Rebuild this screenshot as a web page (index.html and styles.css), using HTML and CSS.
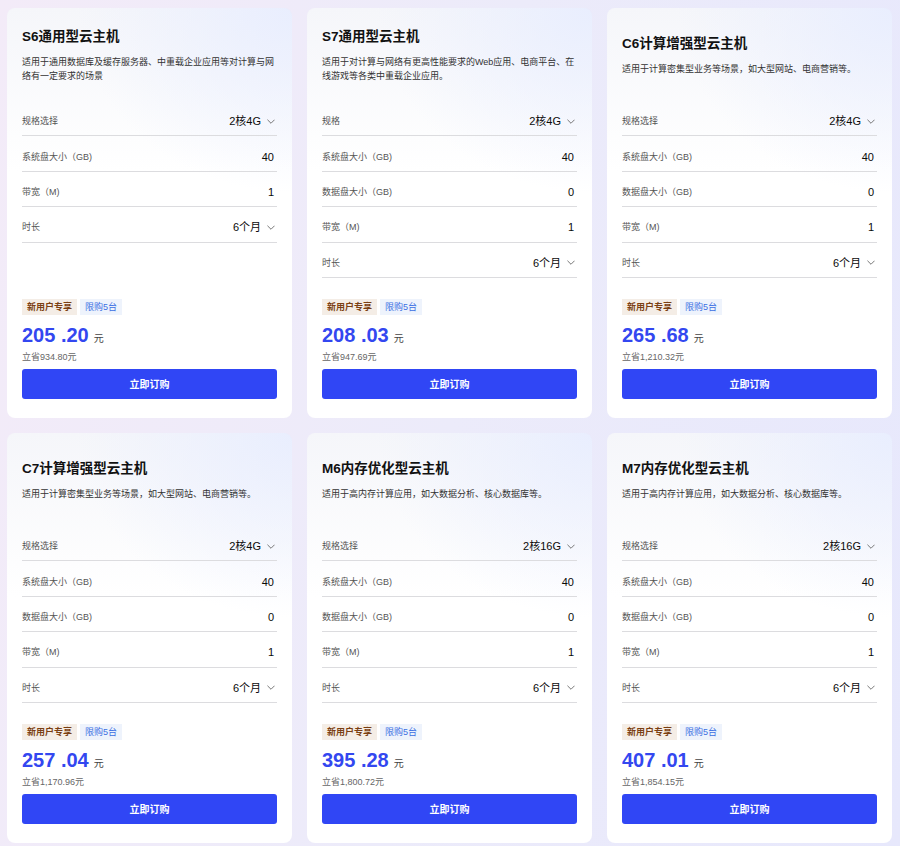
FILE: index.html
```html
<!DOCTYPE html>
<html lang="zh-CN">
<head>
  <meta charset="UTF-8" />
  <title>云主机特惠</title>
  <link rel="stylesheet" href="styles.css">
</head>
<body>

<div class="product-grid">

  <div class="card">
    <div class="card-head">
      <h3 class="card-title">S6通用型云主机</h3>
      <p class="card-desc">适用于通用数据库及缓存服务器、中重载企业应用等对计算与网络有一定要求的场景</p>
    </div>
    <div class="spec-row"><span class="spec-label">规格选择</span><span class="spec-value">2核4G<svg class="chevron" viewBox="0 0 9 5"><polyline points="0.5,0.5 4.5,4.5 8.5,0.5" /></svg></span></div>
    <div class="spec-row"><span class="spec-label">系统盘大小（GB)</span><span class="spec-value">40</span></div>
    <div class="spec-row"><span class="spec-label">带宽（M)</span><span class="spec-value">1</span></div>
    <div class="spec-row"><span class="spec-label">时长</span><span class="spec-value">6个月<svg class="chevron" viewBox="0 0 9 5"><polyline points="0.5,0.5 4.5,4.5 8.5,0.5" /></svg></span></div>
    <div class="card-foot">
      <div class="tags"><span class="tag tag-new">新用户专享</span><span class="tag tag-limit">限购5台</span></div>
      <div class="price">205 .20<span class="unit">元</span></div>
      <div class="save">立省934.80元</div>
      <button class="buy-btn">立即订购</button>
    </div>
  </div>

  <div class="card">
    <div class="card-head">
      <h3 class="card-title">S7通用型云主机</h3>
      <p class="card-desc">适用于对计算与网络有更高性能要求的Web应用、电商平台、在线游戏等各类中重载企业应用。</p>
    </div>
    <div class="spec-row"><span class="spec-label">规格</span><span class="spec-value">2核4G<svg class="chevron" viewBox="0 0 9 5"><polyline points="0.5,0.5 4.5,4.5 8.5,0.5" /></svg></span></div>
    <div class="spec-row"><span class="spec-label">系统盘大小（GB)</span><span class="spec-value">40</span></div>
    <div class="spec-row"><span class="spec-label">数据盘大小（GB)</span><span class="spec-value">0</span></div>
    <div class="spec-row"><span class="spec-label">带宽（M)</span><span class="spec-value">1</span></div>
    <div class="spec-row"><span class="spec-label">时长</span><span class="spec-value">6个月<svg class="chevron" viewBox="0 0 9 5"><polyline points="0.5,0.5 4.5,4.5 8.5,0.5" /></svg></span></div>
    <div class="card-foot">
      <div class="tags"><span class="tag tag-new">新用户专享</span><span class="tag tag-limit">限购5台</span></div>
      <div class="price">208 .03<span class="unit">元</span></div>
      <div class="save">立省947.69元</div>
      <button class="buy-btn">立即订购</button>
    </div>
  </div>

  <div class="card">
    <div class="card-head">
      <h3 class="card-title">C6计算增强型云主机</h3>
      <p class="card-desc">适用于计算密集型业务等场景，如大型网站、电商营销等。</p>
    </div>
    <div class="spec-row"><span class="spec-label">规格选择</span><span class="spec-value">2核4G<svg class="chevron" viewBox="0 0 9 5"><polyline points="0.5,0.5 4.5,4.5 8.5,0.5" /></svg></span></div>
    <div class="spec-row"><span class="spec-label">系统盘大小（GB)</span><span class="spec-value">40</span></div>
    <div class="spec-row"><span class="spec-label">数据盘大小（GB)</span><span class="spec-value">0</span></div>
    <div class="spec-row"><span class="spec-label">带宽（M)</span><span class="spec-value">1</span></div>
    <div class="spec-row"><span class="spec-label">时长</span><span class="spec-value">6个月<svg class="chevron" viewBox="0 0 9 5"><polyline points="0.5,0.5 4.5,4.5 8.5,0.5" /></svg></span></div>
    <div class="card-foot">
      <div class="tags"><span class="tag tag-new">新用户专享</span><span class="tag tag-limit">限购5台</span></div>
      <div class="price">265 .68<span class="unit">元</span></div>
      <div class="save">立省1,210.32元</div>
      <button class="buy-btn">立即订购</button>
    </div>
  </div>

  <div class="card">
    <div class="card-head">
      <h3 class="card-title">C7计算增强型云主机</h3>
      <p class="card-desc">适用于计算密集型业务等场景，如大型网站、电商营销等。</p>
    </div>
    <div class="spec-row"><span class="spec-label">规格选择</span><span class="spec-value">2核4G<svg class="chevron" viewBox="0 0 9 5"><polyline points="0.5,0.5 4.5,4.5 8.5,0.5" /></svg></span></div>
    <div class="spec-row"><span class="spec-label">系统盘大小（GB)</span><span class="spec-value">40</span></div>
    <div class="spec-row"><span class="spec-label">数据盘大小（GB)</span><span class="spec-value">0</span></div>
    <div class="spec-row"><span class="spec-label">带宽（M)</span><span class="spec-value">1</span></div>
    <div class="spec-row"><span class="spec-label">时长</span><span class="spec-value">6个月<svg class="chevron" viewBox="0 0 9 5"><polyline points="0.5,0.5 4.5,4.5 8.5,0.5" /></svg></span></div>
    <div class="card-foot">
      <div class="tags"><span class="tag tag-new">新用户专享</span><span class="tag tag-limit">限购5台</span></div>
      <div class="price">257 .04<span class="unit">元</span></div>
      <div class="save">立省1,170.96元</div>
      <button class="buy-btn">立即订购</button>
    </div>
  </div>

  <div class="card">
    <div class="card-head">
      <h3 class="card-title">M6内存优化型云主机</h3>
      <p class="card-desc">适用于高内存计算应用，如大数据分析、核心数据库等。</p>
    </div>
    <div class="spec-row"><span class="spec-label">规格选择</span><span class="spec-value">2核16G<svg class="chevron" viewBox="0 0 9 5"><polyline points="0.5,0.5 4.5,4.5 8.5,0.5" /></svg></span></div>
    <div class="spec-row"><span class="spec-label">系统盘大小（GB)</span><span class="spec-value">40</span></div>
    <div class="spec-row"><span class="spec-label">数据盘大小（GB)</span><span class="spec-value">0</span></div>
    <div class="spec-row"><span class="spec-label">带宽（M)</span><span class="spec-value">1</span></div>
    <div class="spec-row"><span class="spec-label">时长</span><span class="spec-value">6个月<svg class="chevron" viewBox="0 0 9 5"><polyline points="0.5,0.5 4.5,4.5 8.5,0.5" /></svg></span></div>
    <div class="card-foot">
      <div class="tags"><span class="tag tag-new">新用户专享</span><span class="tag tag-limit">限购5台</span></div>
      <div class="price">395 .28<span class="unit">元</span></div>
      <div class="save">立省1,800.72元</div>
      <button class="buy-btn">立即订购</button>
    </div>
  </div>

  <div class="card">
    <div class="card-head">
      <h3 class="card-title">M7内存优化型云主机</h3>
      <p class="card-desc">适用于高内存计算应用，如大数据分析、核心数据库等。</p>
    </div>
    <div class="spec-row"><span class="spec-label">规格选择</span><span class="spec-value">2核16G<svg class="chevron" viewBox="0 0 9 5"><polyline points="0.5,0.5 4.5,4.5 8.5,0.5" /></svg></span></div>
    <div class="spec-row"><span class="spec-label">系统盘大小（GB)</span><span class="spec-value">40</span></div>
    <div class="spec-row"><span class="spec-label">数据盘大小（GB)</span><span class="spec-value">0</span></div>
    <div class="spec-row"><span class="spec-label">带宽（M)</span><span class="spec-value">1</span></div>
    <div class="spec-row"><span class="spec-label">时长</span><span class="spec-value">6个月<svg class="chevron" viewBox="0 0 9 5"><polyline points="0.5,0.5 4.5,4.5 8.5,0.5" /></svg></span></div>
    <div class="card-foot">
      <div class="tags"><span class="tag tag-new">新用户专享</span><span class="tag tag-limit">限购5台</span></div>
      <div class="price">407 .01<span class="unit">元</span></div>
      <div class="save">立省1,854.15元</div>
      <button class="buy-btn">立即订购</button>
    </div>
  </div>

</div>

</body>
</html>
```

FILE: styles.css
```css
body {
  margin: 0;
  padding: 0;
  min-height: 846px;
  font-family: "Liberation Sans", "Noto Sans CJK SC", sans-serif;
  background: linear-gradient(100deg, #f3ebf8 0%, #ecebfa 50%, #e7e8fc 100%);
  color: #222;
}

.product-grid {
  display: grid;
  grid-template-columns: repeat(3, 285px);
  gap: 15px;
  padding: 8px 8px 6px 7px;
}

.card {
  display: flex;
  flex-direction: column;
  padding: 0 15px 19px;
  border-radius: 8px;
  background:
    radial-gradient(ellipse 75% 45% at 100% 0%, #e9eefe 0%, rgba(255,255,255,0) 100%),
    linear-gradient(180deg, #f5f6fa 0%, #ffffff 40%);
  background-color: #fff;
}

.card-head {
  box-sizing: border-box;
  height: 93px;
  padding-top: 2px;
  display: flex;
  flex-direction: column;
  justify-content: center;
}

.card-title {
  margin: 0;
  font-size: 13.5px;
  line-height: 18px;
  font-weight: bold;
  color: #111;
}

.card-desc {
  margin: 9px 0 0;
  font-size: 9px;
  line-height: 14px;
  color: #333;
}

.spec-row {
  box-sizing: border-box;
  height: 35.4px;
  display: flex;
  justify-content: space-between;
  align-items: center;
  padding: 6px 0 0;
  border-bottom: 1px solid #dcdcdf;
}

.spec-label {
  font-size: 9px;
  line-height: 14px;
  color: #555;
}

.spec-value {
  display: flex;
  align-items: center;
  font-size: 11px;
  line-height: 14px;
  color: #0a0a0a;
  padding-right: 3px;
}

.chevron {
  width: 8px;
  height: 5px;
  margin-left: 6px;
  margin-right: -1px;
  fill: none;
  stroke: #666;
  stroke-width: 1;
}

.card-foot {
  margin-top: auto;
  padding-top: 21px;
}

.tags {
  display: flex;
  gap: 3px;
  height: 16px;
}

.tag {
  height: 16px;
  line-height: 16px;
  padding: 0 5px;
  font-size: 9px;
  font-weight: bold;
}

.tag-new {
  background: #f4ede6;
  color: #7b3f12;
}

.tag-limit {
  background: #eef3fc;
  color: #3b6fe3;
  font-weight: normal;
}

.price {
  height: 24px;
  margin-top: 8px;
  line-height: 24px;
  font-size: 20px;
  font-weight: bold;
  color: #3347f0;
  overflow: hidden;
}

.price .unit {
  margin-left: 5px;
  font-size: 10px;
  line-height: 10px;
  font-weight: normal;
  color: #444;
}

.save {
  height: 14px;
  margin-top: 3px;
  font-size: 9px;
  line-height: 14px;
  color: #666;
}

.buy-btn {
  display: block;
  width: 100%;
  height: 30px;
  margin-top: 5px;
  border: none;
  border-radius: 3px;
  background: #3046f5;
  color: #fff;
  font-family: "Liberation Sans", "Noto Sans CJK SC", sans-serif;
  font-size: 10px;
  font-weight: bold;
  cursor: pointer;
}
```
